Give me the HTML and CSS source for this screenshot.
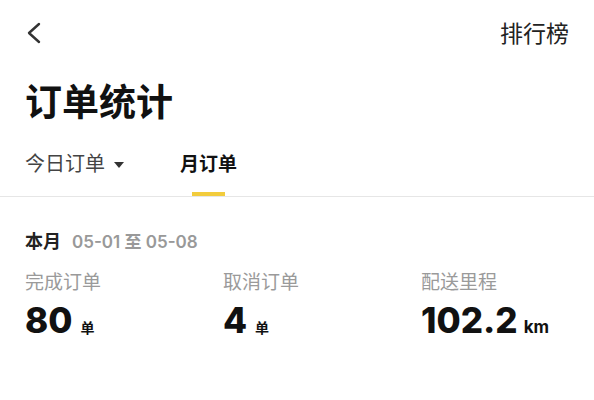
FILE: index.html
```html
<!DOCTYPE html>
<html lang="zh-CN">
<head>
  <meta charset="UTF-8" />
  <meta name="viewport" content="width=device-width, initial-scale=1.0" />
  <title>订单统计</title>
  <link rel="stylesheet" href="styles.css">
</head>
<body>
  <div class="topbar">
    <svg class="back" width="16" height="22" viewBox="0 0 16 22">
      <path d="M13 2 L3 11 L13 20" fill="none" stroke="#333" stroke-width="2.4" stroke-linecap="round" stroke-linejoin="round"/>
    </svg>
    <span class="rank">排行榜</span>
  </div>

  <h1 class="title">订单统计</h1>

  <div class="tabs">
    <div class="tab">
      <span class="tab-label">今日订单 <i class="caret"></i></span>
      <span class="bar"></span>
    </div>
    <div class="tab active">
      <span class="tab-label">月订单</span>
      <span class="bar"></span>
    </div>
  </div>

  <div class="stats">
    <div class="period">本月<span class="range">05-01 至 05-08</span></div>
    <div class="grid">
      <div class="item">
        <div class="label">完成订单</div>
        <div class="value">80<span class="unit">单</span></div>
      </div>
      <div class="item">
        <div class="label">取消订单</div>
        <div class="value">4<span class="unit">单</span></div>
      </div>
      <div class="item">
        <div class="label">配送里程</div>
        <div class="value">102.2<span class="unit km">km</span></div>
      </div>
    </div>
  </div>
</body>
</html>
```

FILE: styles.css
```css
body {
  margin: 0;
  background: #fff;
  color: #1a1a1a;
  font-family: "Inter", "Noto Sans CJK SC", sans-serif;
}

.topbar {
  height: 64px;
  padding: 0 25px 0 26px;
  display: flex;
  align-items: center;
  justify-content: space-between;
}

.back {
  display: block;
  margin-top: 2px;
}

.rank {
  font-family: "Noto Sans CJK SC", sans-serif;
  font-size: 23px;
  line-height: 30px;
  color: #222;
}

.title {
  margin: 14px 0 0;
  padding: 0 25px;
  font-family: "Noto Sans CJK SC", sans-serif;
  font-size: 37px;
  line-height: 44px;
  font-weight: 700;
  color: #111;
}

.tabs {
  margin-top: 27px;
  padding: 0 25px;
  display: flex;
  gap: 56px;
  border-bottom: 1px solid #e6e6e6;
}

.tab {
  display: flex;
  flex-direction: column;
  align-items: center;
}

.tab-label {
  font-family: "Noto Sans CJK SC", sans-serif;
  font-size: 20px;
  line-height: 28px;
  color: #444;
  display: flex;
  align-items: center;
}

.caret {
  display: inline-block;
  width: 0;
  height: 0;
  margin-left: 9px;
  margin-top: 3px;
  border-left: 5px solid transparent;
  border-right: 5px solid transparent;
  border-top: 6px solid #333;
}

.bar {
  width: 33px;
  height: 4px;
  margin-top: 15px;
}

.tab.active .tab-label {
  font-weight: 700;
  color: #111;
  font-size: 19px;
}

.tab.active .bar {
  background: #f2cc3c;
}

.stats {
  padding: 0 25px;
}

.period {
  margin-top: 31px;
  font-family: "Noto Sans CJK SC", sans-serif;
  font-size: 18px;
  line-height: 24px;
  font-weight: 700;
  color: #222;
}

.range {
  margin-left: 11px;
  font-family: "Inter", "Noto Sans CJK SC", sans-serif;
  font-size: 17px;
  font-weight: 600;
  color: #999;
}

.grid {
  display: grid;
  grid-template-columns: 198px 198px 1fr;
  margin-top: 15px;
}

.label {
  font-family: "Noto Sans CJK SC", sans-serif;
  font-size: 19px;
  line-height: 24px;
  color: #9a9a9a;
}

.value {
  margin-top: 7px;
  font-size: 35px;
  line-height: 40px;
  font-weight: 800;
  color: #111;
}

.unit {
  margin-left: 8px;
  font-family: "Noto Sans CJK SC", sans-serif;
  font-size: 14px;
  font-weight: 700;
}

.unit.km {
  margin-left: 6px;
  font-family: "Inter", sans-serif;
  font-size: 17px;
}
```
